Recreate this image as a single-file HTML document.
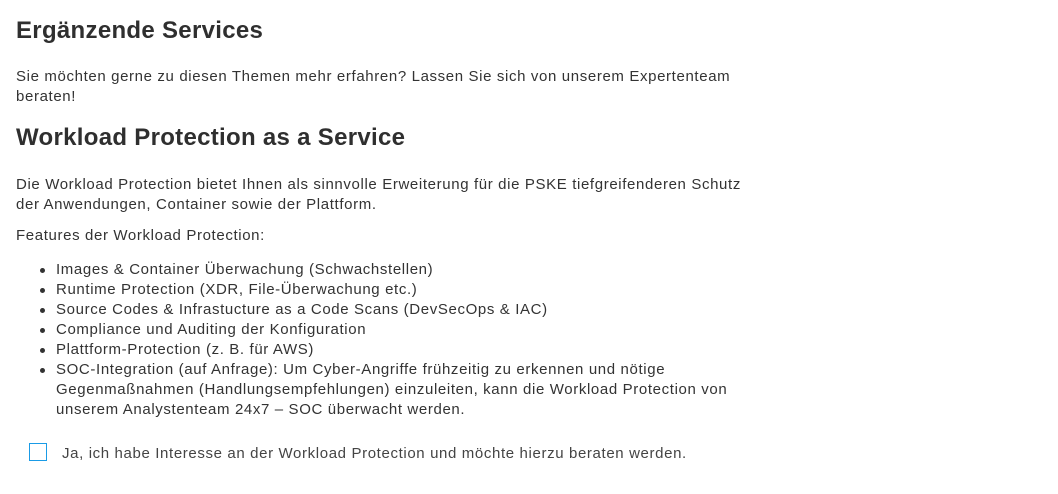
<!DOCTYPE html>
<html><head><meta charset="utf-8"><style>
body{margin:0;background:#fff;color:#333;font-family:"Liberation Sans",sans-serif;}
.w{position:relative;width:1058px;height:493px;top:1px}
.t{position:absolute;left:16px;white-space:nowrap;font-size:15px;letter-spacing:0.63px;line-height:20px;}
h1,h2{position:absolute;left:16px;margin:0;font-weight:bold;font-size:24px;letter-spacing:0.3px;white-space:nowrap;line-height:26px;color:#2f2f2f}
.li{position:absolute;left:56px;white-space:nowrap;font-size:15px;letter-spacing:0.63px;line-height:20px;}
.li.b::before{content:"";position:absolute;left:-16px;top:8px;width:5px;height:5px;border-radius:50%;background:#333;}
.cb{position:absolute;left:29px;top:442px;border:1.5px solid #1a9be6;box-sizing:border-box;width:18px;height:18px}
</style></head><body><div class="w">
<h1 style="top:17px">Ergänzende Services</h1>
<div class="t" style="top:66px">Sie möchten gerne zu diesen Themen mehr erfahren? Lassen Sie sich von unserem Expertenteam</div>
<div class="t" style="top:86px">beraten!</div>
<h2 style="top:124px">Workload Protection as a Service</h2>
<div class="t" style="top:174px">Die Workload Protection bietet Ihnen als sinnvolle Erweiterung für die PSKE tiefgreifenderen Schutz</div>
<div class="t" style="top:194px">der Anwendungen, Container sowie der Plattform.</div>
<div class="t" style="top:225px">Features der Workload Protection:</div>
<div class="li b" style="top:259px">Images &amp; Container Überwachung (Schwachstellen)</div>
<div class="li b" style="top:279px">Runtime Protection (XDR, File-Überwachung etc.)</div>
<div class="li b" style="top:299px">Source Codes &amp; Infrastucture as a Code Scans (DevSecOps &amp; IAC)</div>
<div class="li b" style="top:319px">Compliance und Auditing der Konfiguration</div>
<div class="li b" style="top:339px">Plattform-Protection (z. B. für AWS)</div>
<div class="li b" style="top:359px">SOC-Integration (auf Anfrage): Um Cyber-Angriffe frühzeitig zu erkennen und nötige</div>
<div class="li" style="top:379px">Gegenmaßnahmen (Handlungsempfehlungen) einzuleiten, kann die Workload Protection von</div>
<div class="li" style="top:399px">unserem Analystenteam 24x7 – SOC überwacht werden.</div>
<div class="cb"></div>
<div class="t" style="left:62px;top:443px;color:#444">Ja, ich habe Interesse an der Workload Protection und möchte hierzu beraten werden.</div>
</div></body></html>
